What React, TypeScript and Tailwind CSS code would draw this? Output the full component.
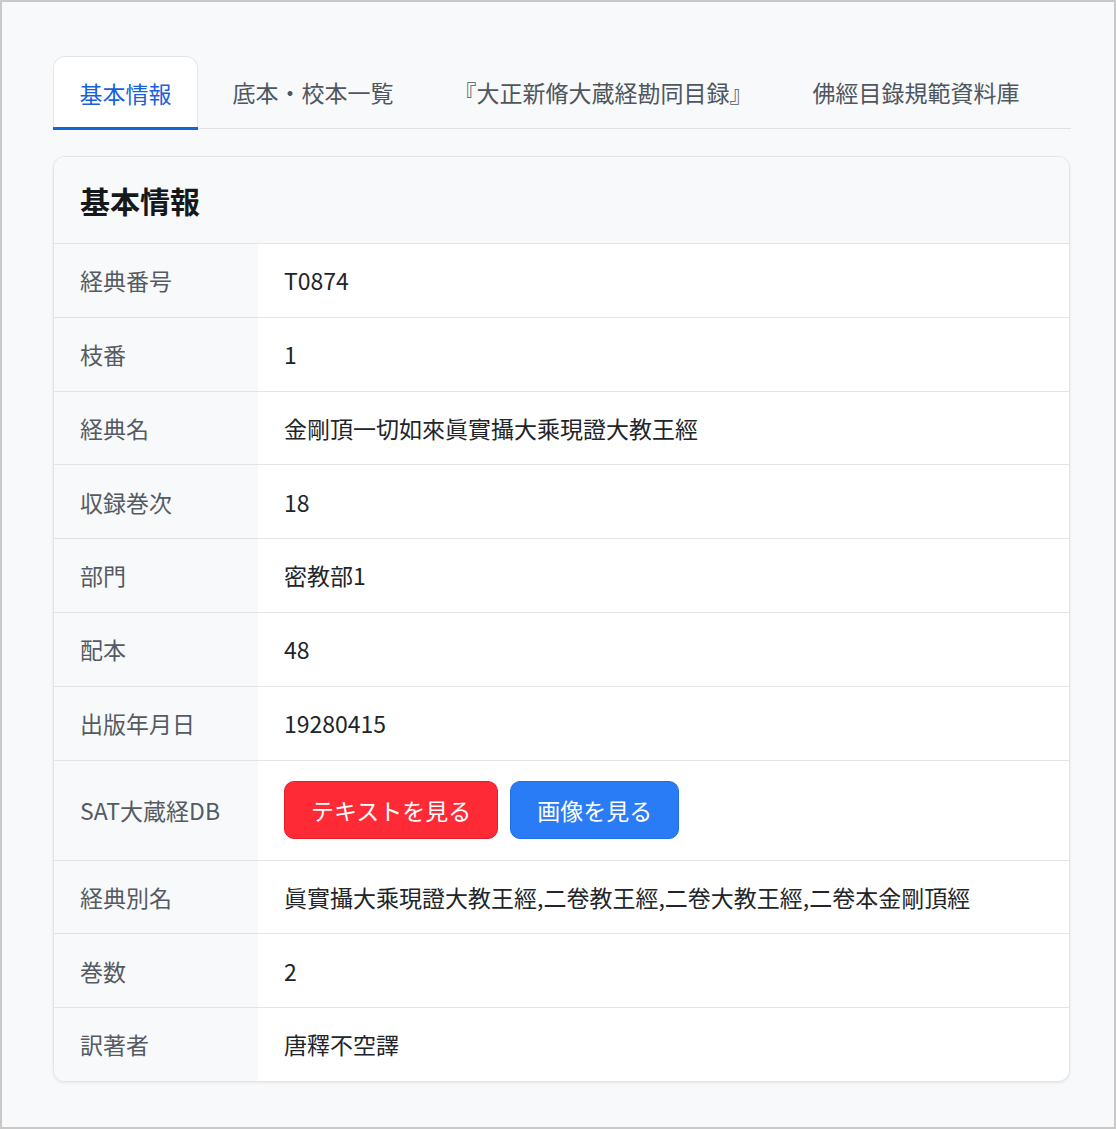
const TABS = ["基本情報", "底本・校本一覧", "『大正新脩大蔵経勘同目録』", "佛經目錄規範資料庫"];

const ROWS_TOP: [string, string][] = [
  ["経典番号", "T0874"],
  ["枝番", "1"],
  ["経典名", "金剛頂一切如來眞實攝大乘現證大教王經"],
  ["収録巻次", "18"],
  ["部門", "密教部1"],
  ["配本", "48"],
  ["出版年月日", "19280415"],
];

const ROWS_BOTTOM: [string, string][] = [
  ["経典別名", "眞實攝大乘現證大教王經,二卷教王經,二卷大教王經,二卷本金剛頂經"],
  ["巻数", "2"],
  ["訳著者", "唐釋不空譯"],
];

function Row({ label, children, tall }: { label: string; children: React.ReactNode; tall?: boolean }) {
  return (
    <div className={`flex border-t border-[#e3e5e8] ${tall ? "h-[100px]" : "h-[73.8px]"}`}>
      <div className="w-[204px] shrink-0 bg-[#f8f9fa] flex items-center pl-[26px] text-[#555b62]">{label}</div>
      <div className="flex-1 flex items-center pl-[26px] text-[#212529]">{children}</div>
    </div>
  );
}

export default function App() {
  return (
    <div
      className="w-[1116px] h-[1129px] border-2 border-[#c9c9c9] bg-[#f8f9fa] pt-[54px] pl-[51px] text-[23px]"
      style={{ fontFamily: '"Noto Sans CJK JP", "Noto Sans", sans-serif' }}
    >
      <div className="w-[1018px]">
        <div className="flex gap-[9px] border-b border-[#dee2e6] h-[73px]">
          {TABS.map((t, i) =>
            i === 0 ? (
              <div
                key={t}
                className="h-[73px] px-[25.5px] flex items-center bg-white border border-b-0 border-[#e3e5e8] rounded-t-[12px] text-[#1a5fdb] relative"
              >
                {t}
                <div className="absolute left-[-1px] right-[-1px] bottom-[-1px] h-[3px] bg-[#1665d8]" />
              </div>
            ) : (
              <div key={t} className="h-[73px] px-[25.5px] flex items-center text-[#4f565e]">
                {t}
              </div>
            )
          )}
        </div>

        <div className="mt-[27px] w-[1017px] bg-white border border-[#e3e5e8] rounded-[12px] shadow-[0_1px_3px_rgba(0,0,0,0.08)] overflow-hidden">
          <div className="h-[86px] bg-[#f8f9fa] flex items-center pl-[26px] text-[30px] font-bold text-[#16191c]">
            基本情報
          </div>
          {ROWS_TOP.map(([l, v]) => (
            <Row key={l} label={l}>
              {v}
            </Row>
          ))}
          <Row label="SAT大蔵経DB" tall>
            <div className="flex gap-[12px]">
              <button className="h-[58px] px-[26px] rounded-[10px] bg-[#fe2b37] border border-[#e0202c] text-white">
                テキストを見る
              </button>
              <button className="h-[58px] px-[26px] rounded-[10px] bg-[#2a7cf6] border border-[#1f6fe6] text-white">
                画像を見る
              </button>
            </div>
          </Row>
          {ROWS_BOTTOM.map(([l, v]) => (
            <Row key={l} label={l}>
              {v}
            </Row>
          ))}
        </div>
      </div>
    </div>
  );
}
